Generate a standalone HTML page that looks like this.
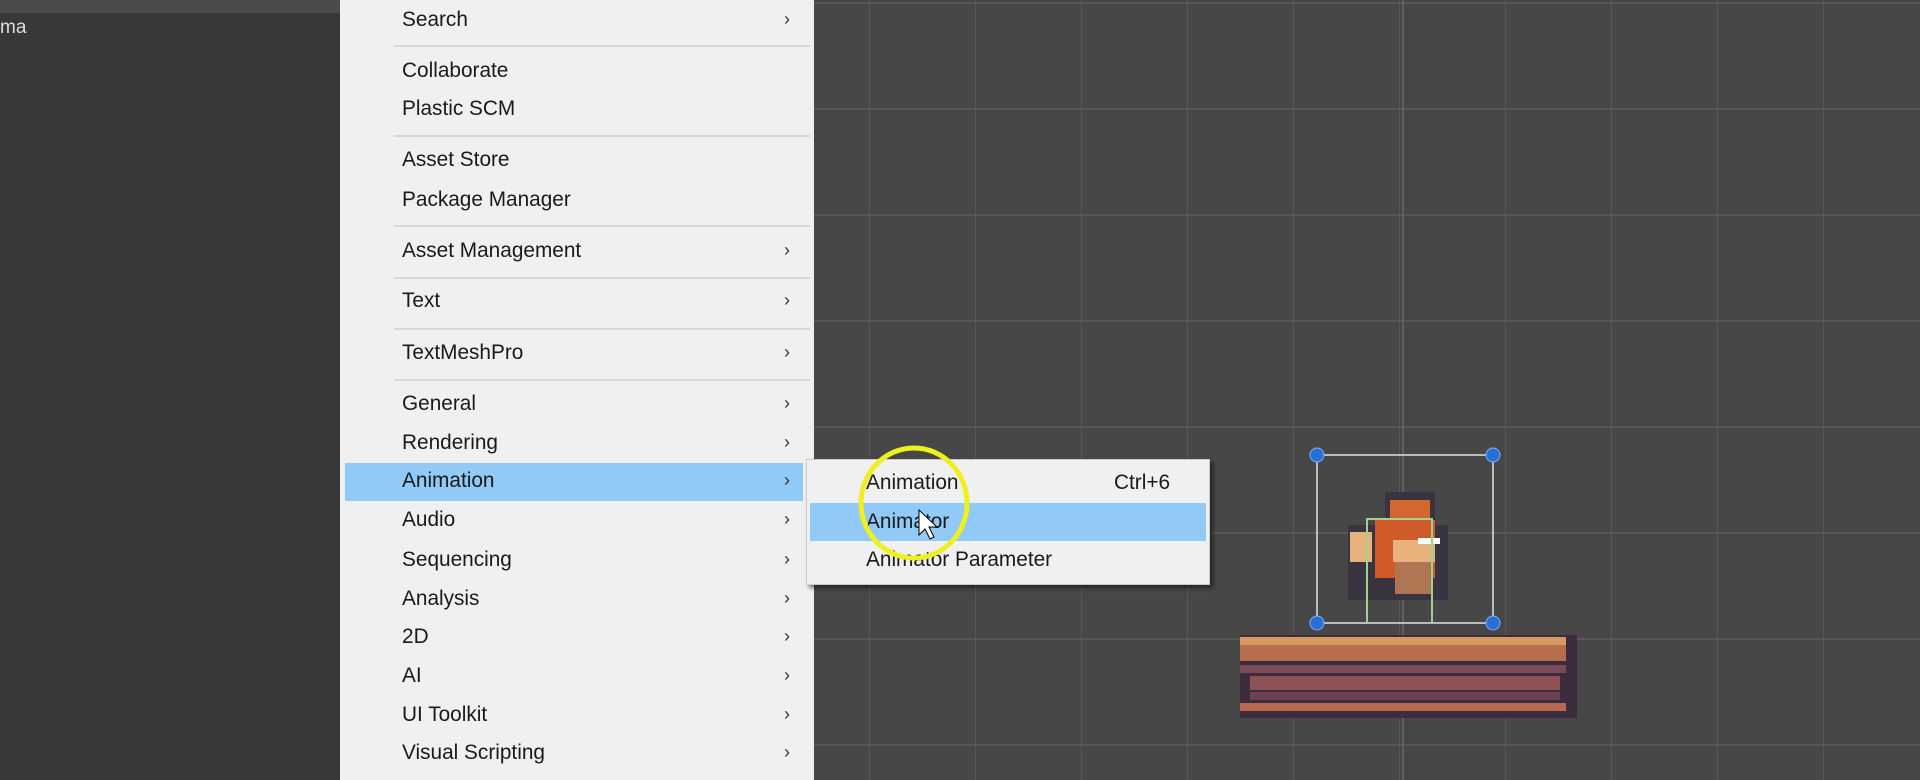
<!DOCTYPE html>
<html><head><style>
*{margin:0;padding:0;box-sizing:border-box}
body{width:1920px;height:780px;overflow:hidden;background:#474747;position:relative;font-family:"Liberation Sans",sans-serif}
.grid{position:absolute;left:814px;top:0;right:0;bottom:0;
background-image:linear-gradient(90deg,#575757 1px,transparent 1px),linear-gradient(#575757 2px,transparent 2px);
background-size:106px 106px;background-position:55px 0,0 2px}
.left{position:absolute;left:0;top:0;width:340px;height:780px;background:#383838}
.left .top{height:13px;background:#4b4b4b}
.menu{position:absolute;left:340px;top:0;width:474px;height:780px;background:#f0f0f0}
.it{position:absolute;left:62px;font-size:20.8px;color:#1a1a1a;line-height:20px}
.ar{position:absolute;left:444px;font-size:18px;color:#333;line-height:20px}
.sep{position:absolute;left:54px;width:416px;height:2px;background:#d8d8d8}
.hl{position:absolute;left:5px;width:458px;top:463px;height:38px;background:#91c9f7}
.sub{position:absolute;left:806px;top:459px;width:404px;height:126px;background:#f0f0f0;box-shadow:3px 3px 4px rgba(0,0,0,.5);border:1px solid #ccc}
.sub .hl2{position:absolute;left:3px;top:43px;width:396px;height:38px;background:#91c9f7}
.sub .t{position:absolute;left:59px;font-size:20.8px;color:#1a1a1a;line-height:20px}
</style></head><body>
<div class="grid"></div>
<div style="position:absolute;left:1402px;top:0;width:2px;height:780px;background:#606060"></div>
<div class="left"><div class="top"></div><div style="position:absolute;left:0;top:17px;color:#ddd;font-size:19px">ma</div></div>
<div class="menu">
<div class="hl"></div>
<div class="it" style="top:10px">Search</div><div class="ar" style="top:9px">›</div>
<div class="sep" style="top:45px"></div>
<div class="it" style="top:61px">Collaborate</div>
<div class="it" style="top:99px">Plastic SCM</div>
<div class="sep" style="top:135px"></div>
<div class="it" style="top:150px">Asset Store</div>
<div class="it" style="top:190px">Package Manager</div>
<div class="sep" style="top:225px"></div>
<div class="it" style="top:241px">Asset Management</div><div class="ar" style="top:240px">›</div>
<div class="sep" style="top:277px"></div>
<div class="it" style="top:291px">Text</div><div class="ar" style="top:290px">›</div>
<div class="sep" style="top:328px"></div>
<div class="it" style="top:343px">TextMeshPro</div><div class="ar" style="top:342px">›</div>
<div class="sep" style="top:379px"></div>
<div class="it" style="top:394px">General</div><div class="ar" style="top:393px">›</div>
<div class="it" style="top:433px">Rendering</div><div class="ar" style="top:432px">›</div>
<div class="it" style="top:471px">Animation</div><div class="ar" style="top:470px">›</div>
<div class="it" style="top:510px">Audio</div><div class="ar" style="top:509px">›</div>
<div class="it" style="top:550px">Sequencing</div><div class="ar" style="top:549px">›</div>
<div class="it" style="top:589px">Analysis</div><div class="ar" style="top:588px">›</div>
<div class="it" style="top:627px">2D</div><div class="ar" style="top:626px">›</div>
<div class="it" style="top:666px">AI</div><div class="ar" style="top:665px">›</div>
<div class="it" style="top:705px">UI Toolkit</div><div class="ar" style="top:704px">›</div>
<div class="it" style="top:743px">Visual Scripting</div><div class="ar" style="top:742px">›</div>
</div>
<div class="sub">
<div class="hl2"></div>
<div class="t" style="top:13px">Animation</div>
<div class="t" style="top:13px;left:307px">Ctrl+6</div>
<div class="t" style="top:52px">Animator</div>
<div class="t" style="top:90px">Animator Parameter</div>
</div>
<svg style="position:absolute;left:0;top:0" width="1920" height="780">
<ellipse cx="914" cy="503" rx="53" ry="55" fill="none" stroke="#eef020" stroke-width="5"/>
<path d="M919 510 L919 535 L925 529 L930 539 L934 537 L929 527 L937 527 Z" fill="#fff" stroke="#000" stroke-width="1"/>
<rect x="1240" y="635" width="337" height="83" fill="#3b2d3d"/>
<rect x="1240" y="637" width="326" height="24" fill="#b86e4c"/>
<rect x="1240" y="637" width="326" height="8" fill="#d89a62"/>
<rect x="1240" y="665" width="326" height="8" fill="#7a4a55"/>
<rect x="1250" y="676" width="310" height="14" fill="#8e5155"/>
<rect x="1250" y="692" width="310" height="8" fill="#6e4050"/>
<rect x="1240" y="703" width="326" height="8" fill="#b86850"/>
<rect x="1385" y="492" width="50" height="30" fill="#3a3440"/>
<rect x="1348" y="525" width="100" height="75" fill="#3a3440"/>
<rect x="1390" y="500" width="40" height="25" fill="#d2682c"/>
<rect x="1375" y="520" width="60" height="58" fill="#d05a2a"/>
<rect x="1393" y="540" width="42" height="22" fill="#e8b27c"/>
<rect x="1350" y="532" width="22" height="30" fill="#e8b27c"/>
<rect x="1395" y="562" width="38" height="32" fill="#b07552"/>
<rect x="1418" y="538" width="22" height="6" fill="#fff"/>
<rect x="1367" y="519" width="65" height="104" fill="none" stroke="#9fd28a" stroke-width="2"/>
<rect x="1317" y="455" width="176" height="168" fill="none" stroke="#bbb" stroke-width="2"/>
<g fill="#2a6fd6" stroke="#7ab0ff" stroke-width="1"><circle cx="1317" cy="455" r="7"/><circle cx="1493" cy="455" r="7"/><circle cx="1317" cy="623" r="7"/><circle cx="1493" cy="623" r="7"/></g>
</svg>
</body></html>
